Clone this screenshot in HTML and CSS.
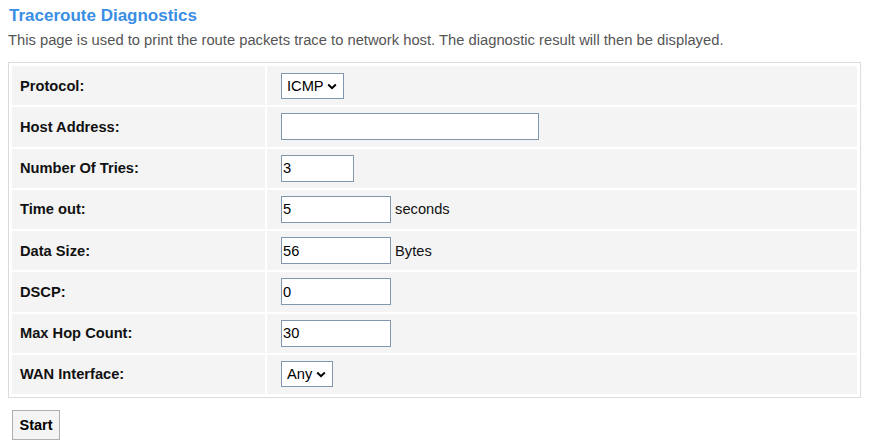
FILE: index.html
```html
<!DOCTYPE html>
<html>
<head>
<meta charset="utf-8">
<link rel="stylesheet" href="styles.css">
</head>
<body>
<div class="title">Traceroute Diagnostics</div>
<div class="desc">This page is used to print the route packets trace to network host. The diagnostic result will then be displayed.</div>
<table class="form">
  <tr><td class="lbl">Protocol:</td><td class="val"><span class="selwrap"><select class="sel sel-proto"><option>ICMP</option><option>UDP</option></select><svg class="chev" width="10" height="7" viewBox="0 0 10 7"><path d="M1.2 1.5 L5 5.2 L8.8 1.5" fill="none" stroke="#000" stroke-width="2"/></svg></span></td></tr>
  <tr><td class="lbl">Host Address:</td><td class="val"><input class="inp inp-host" type="text" value=""></td></tr>
  <tr><td class="lbl">Number Of Tries:</td><td class="val"><input class="inp inp-short" type="text" value="3"></td></tr>
  <tr><td class="lbl">Time out:</td><td class="val"><input class="inp inp-mid" type="text" value="5"> <span class="unit">seconds</span></td></tr>
  <tr><td class="lbl">Data Size:</td><td class="val"><input class="inp inp-mid" type="text" value="56"> <span class="unit">Bytes</span></td></tr>
  <tr><td class="lbl">DSCP:</td><td class="val"><input class="inp inp-mid" type="text" value="0"></td></tr>
  <tr><td class="lbl">Max Hop Count:</td><td class="val"><input class="inp inp-mid" type="text" value="30"></td></tr>
  <tr><td class="lbl">WAN Interface:</td><td class="val"><span class="selwrap"><select class="sel sel-wan"><option>Any</option></select><svg class="chev" width="10" height="7" viewBox="0 0 10 7"><path d="M1.2 1.5 L5 5.2 L8.8 1.5" fill="none" stroke="#000" stroke-width="2"/></svg></span></td></tr>
</table>
<div class="actions"><button class="btn" type="button">Start</button></div>
</body>
</html>
```
FILE: styles.css
```css
html, body {
  background: #ffffff;
}
body {
  margin: 0 8px;
  font-family: "Liberation Sans", Arial, sans-serif;
  font-size: 14.67px;
  color: #000;
}
.title {
  margin-top: 6px;
  font-size: 17px;
  line-height: 20px;
  font-weight: bold;
  color: #3a8ee3;
  padding-left: 1px;
}
.desc {
  margin-top: 6px;
  font-size: 14.75px;
  line-height: 17px;
  color: #555555;
}
.form {
  margin-top: 13px;
  width: 100%;
  border: 1px solid #dcdcdc;
  border-spacing: 2px;
  padding: 1px;
  box-sizing: border-box;
}
.form td {
  background: #f4f4f4;
  height: 39.25px;
  padding: 0;
  vertical-align: middle;
}
.lbl {
  width: 245px;
  padding-left: 8px !important;
  font-weight: bold;
  color: #111;
}
.val {
  padding-left: 14px !important;
  color: #111;
}
.unit {
  position: relative;
  top: 1px;
}
.inp {
  box-sizing: border-box;
  height: 27px;
  border: 1px solid #7f98b0;
  background: #fff;
  font-family: "Liberation Sans", Arial, sans-serif;
  font-size: 14.67px;
  padding: 0 1px;
  margin: 0;
  vertical-align: middle;
  color: #000;
}
.inp-host { width: 258px; }
.inp-short { width: 73px; }
.inp-mid { width: 110px; }
.selwrap {
  position: relative;
  display: inline-block;
  vertical-align: middle;
}
.sel {
  -webkit-appearance: none;
  appearance: none;
  display: block;
  box-sizing: border-box;
  height: 26px;
  border: 1px solid #7f98b0;
  border-radius: 0;
  background: #fff;
  font-family: "Liberation Sans", Arial, sans-serif;
  font-size: 14.67px;
  color: #000;
  margin: 0;
  padding: 0 0 0 5px;
}
.chev {
  position: absolute;
  right: 7px;
  top: 10px;
  pointer-events: none;
}
.sel-proto { width: 63px; }
.sel-wan { width: 52px; }
.actions {
  margin-top: 12px;
  padding-left: 4px;
}
.btn {
  box-sizing: border-box;
  width: 48px;
  height: 30px;
  border: 1px solid #b0b0b0;
  border-radius: 0;
  background: #f4f4f4;
  font-family: "Liberation Sans", Arial, sans-serif;
  font-size: 14.5px;
  font-weight: bold;
  color: #000;
  padding: 0;
}
```
